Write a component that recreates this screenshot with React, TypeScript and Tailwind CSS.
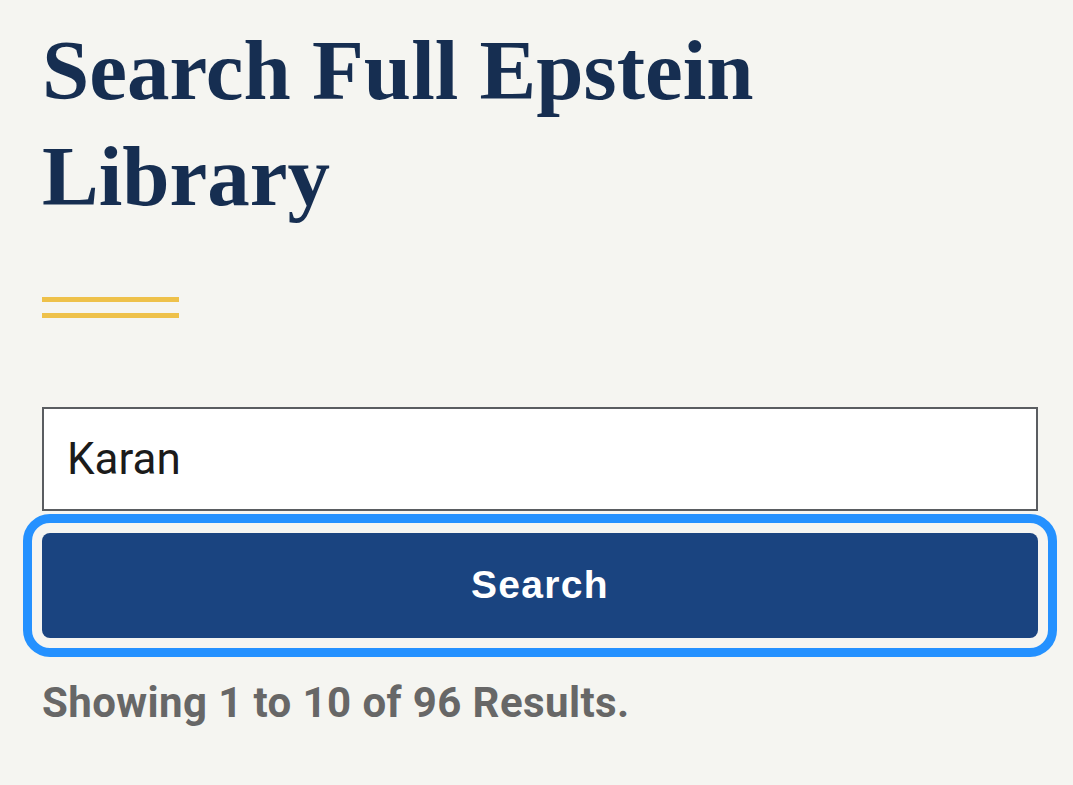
const App = () => {
  return (
    <div className="min-h-[785px] bg-[#f5f5f1] pl-[42px] pr-[35px] pt-[17px]">
      <h1 className="font-['Liberation_Serif',serif] text-[85px] leading-[106px] font-bold text-[#162e51]">
        Search Full Epstein
        <br />
        Library
      </h1>

      <div className="mt-[68px] flex w-[137px] flex-col gap-[11px]">
        <div className="h-[5px] bg-[#eec14a]" />
        <div className="h-[5px] bg-[#eec14a]" />
      </div>

      <form className="mt-[89px]" onSubmit={(e) => e.preventDefault()}>
        <input
          type="text"
          defaultValue="Karan"
          className="block h-[104px] w-full border-2 border-[#5a5d61] bg-white px-[23px] font-['Roboto',sans-serif] text-[44px] text-[#1b1b1b] outline-none"
        />
        <button
          type="submit"
          className="mt-[22px] block h-[105px] w-full rounded-[8px] bg-[#1a4480] font-['Liberation_Sans',sans-serif] text-[39px] font-bold tracking-[1.3px] text-white outline-[9px] outline-offset-[10px] outline-solid outline-[#2491ff]"
        >
          Search
        </button>
      </form>

      <p className="mt-[41px] font-['Roboto',sans-serif] text-[42px] leading-[48px] font-bold tracking-[0.4px] text-[#676767]">
        Showing 1 to 10 of 96 Results.
      </p>
    </div>
  );
};

export default App;
